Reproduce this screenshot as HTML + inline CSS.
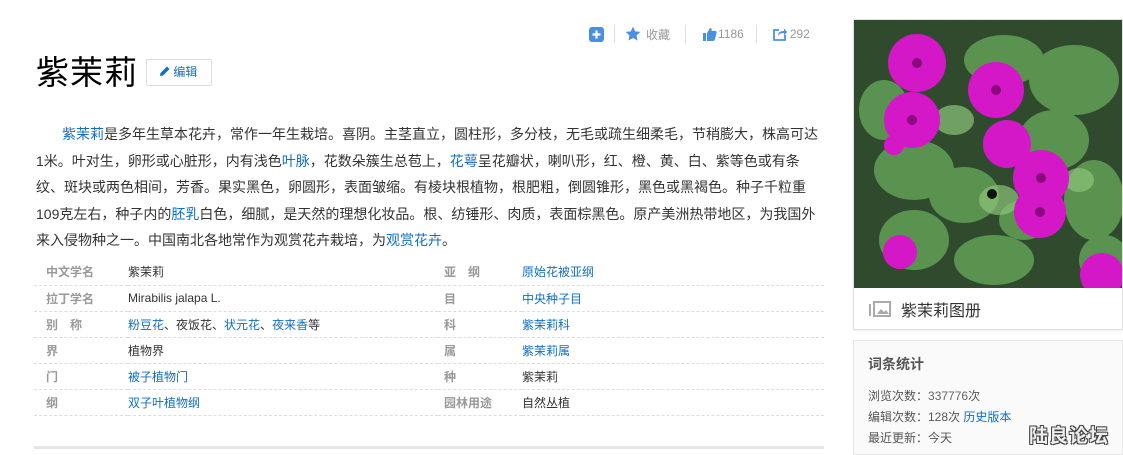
<!DOCTYPE html>
<html><head><meta charset="utf-8"><style>
*{margin:0;padding:0;box-sizing:border-box}
body{width:1123px;height:449px;overflow:hidden;background:#fff;font-family:"Liberation Sans","Noto Sans CJK SC",sans-serif;color:#333;position:relative}
a{color:#136ec2;text-decoration:none}
.abs{position:absolute}
.tools{top:24px;left:589px;height:20px;font-size:12px;color:#999;display:flex;align-items:center}
.sep{width:1px;height:18px;background:#ddd;margin:0 10px}
h1{position:absolute;left:36px;top:46px;font-size:33px;font-weight:normal;color:#000;letter-spacing:1px}
.edit{left:146px;top:59px;width:66px;height:27px;border:1px solid #ddd;border-radius:2px;font-size:12px;color:#136ec2;line-height:25px;padding-left:12px}
.para{left:36px;top:121px;width:786px;font-size:14px;line-height:26.5px;text-indent:26px;color:#333}
table{position:absolute;left:34px;top:259px;width:790px;border-collapse:collapse;font-size:12px}
td{height:26px;border-bottom:1px dashed #ddd;vertical-align:middle}
td.k{color:#999;font-weight:bold;padding-left:12px;width:94px}
td.v{width:310px}
td.k2{color:#999;font-weight:bold;padding-left:6px;width:84px}
.bottom{left:34px;top:446px;width:790px;height:3px;background:#e6e6e6}
.card{left:853px;top:19px;width:270px;height:311px;border:1px solid #e0e0e0;box-shadow:0 1px 2px #eee}
.stat{left:853px;top:340px;width:270px;height:115px;border:1px solid #e6e6e6;background:#fafafa;font-size:12px}
</style></head><body>
<div class="abs tools">
<svg width="15" height="15"><rect width="15" height="15" rx="3" fill="#4a90e2"/><path d="M7.5 3.5v8M3.5 7.5h8" stroke="#fff" stroke-width="2.2"/></svg>
<div class="sep"></div>
<svg width="16" height="16" viewBox="0 0 24 24"><path d="M12 1l3.3 7 7.7.9-5.7 5.3 1.5 7.6L12 18l-6.8 3.8 1.5-7.6L1 8.9 8.7 8z" fill="#4a90e2"/></svg>
<span style="margin-left:5px">收藏</span>
<div class="sep" style="margin-left:15px;margin-right:17px"></div>
<svg width="14" height="14" viewBox="0 0 14 14"><rect x="0" y="6" width="3" height="8" fill="#4a90e2"/><path d="M4 6l3-5c1.5 0 2 1 1.5 3h4c1 0 1.5 1 1 2l-1.5 6c-.3 1-1 2-2 2H4z" fill="#4a90e2"/></svg>
<span style="margin-left:1px">1186</span>
<div class="sep" style="margin-left:12px;margin-right:16px"></div>
<svg width="14" height="14" viewBox="0 0 14 14"><path d="M12 8v5H1V3h5" stroke="#4a90e2" stroke-width="1.8" fill="none"/><path d="M5 9c0-4 3-5 6-5V1.5L14 5l-3 3.5V6C8 6 6 7 5 9z" fill="#4a90e2"/></svg>
<span style="margin-left:3px">292</span>
</div>
<h1>紫茉莉</h1>
<div class="abs edit"><svg width="11" height="11" viewBox="0 0 11 11" style="vertical-align:-1px"><path d="M1 10l.5-3L8 .5l2.5 2.5L4 9.5z" fill="#136ec2"/></svg> 编辑</div>
<div class="abs para"><a>紫茉莉</a>是多年生草本花卉，常作一年生栽培。喜阴。主茎直立，圆柱形，多分枝，无毛或疏生细柔毛，节稍膨大，株高可达1米。叶对生，卵形或心脏形，内有浅色<a>叶脉</a>，花数朵簇生总苞上，<a>花萼</a>呈花瓣状，喇叭形，红、橙、黄、白、紫等色或有条纹、斑块或两色相间，芳香。果实黑色，卵圆形，表面皱缩。有棱块根植物，根肥粗，倒圆锥形，黑色或黑褐色。种子千粒重109克左右，种子内的<a>胚乳</a>白色，细腻，是天然的理想化妆品。根、纺锤形、肉质，表面棕黑色。原产美洲热带地区，为我国外来入侵物种之一。中国南北各地常作为观赏花卉栽培，为<a>观赏花卉</a>。</div>
<table>
<tr><td class="k">中文学名</td><td class="v">紫茉莉</td><td class="k2">亚　纲</td><td><a>原始花被亚纲</a></td></tr>
<tr><td class="k">拉丁学名</td><td class="v">Mirabilis jalapa L.</td><td class="k2">目</td><td><a>中央种子目</a></td></tr>
<tr><td class="k">别　称</td><td class="v"><a>粉豆花</a>、夜饭花、<a>状元花</a>、<a>夜来香</a>等</td><td class="k2">科</td><td><a>紫茉莉科</a></td></tr>
<tr><td class="k">界</td><td class="v">植物界</td><td class="k2">属</td><td><a>紫茉莉属</a></td></tr>
<tr><td class="k">门</td><td class="v"><a>被子植物门</a></td><td class="k2">种</td><td>紫茉莉</td></tr>
<tr><td class="k">纲</td><td class="v"><a>双子叶植物纲</a></td><td class="k2">园林用途</td><td>自然丛植</td></tr>
</table>
<div class="abs bottom"></div>
<div class="abs card">
<svg width="268" height="268" style="display:block">
<rect width="268" height="268" fill="#2f4a2c"/>
<g fill="#5f9a55" opacity=".9">
<ellipse cx="150" cy="40" rx="40" ry="25"/><ellipse cx="220" cy="60" rx="45" ry="35"/><ellipse cx="60" cy="150" rx="40" ry="30"/>
<ellipse cx="110" cy="175" rx="35" ry="28"/><ellipse cx="200" cy="120" rx="35" ry="30"/><ellipse cx="240" cy="180" rx="30" ry="40"/>
<ellipse cx="60" cy="220" rx="35" ry="30"/><ellipse cx="140" cy="240" rx="40" ry="25"/><ellipse cx="30" cy="90" rx="25" ry="30"/>
<ellipse cx="170" cy="200" rx="25" ry="20"/><ellipse cx="250" cy="240" rx="25" ry="25"/></g>
<g fill="#8cc47a" opacity=".7"><ellipse cx="100" cy="100" rx="20" ry="15"/><ellipse cx="145" cy="180" rx="20" ry="15"/><ellipse cx="225" cy="160" rx="15" ry="12"/></g>
<g fill="#d418c8">
<circle cx="63" cy="43" r="29"/><circle cx="142" cy="70" r="28"/><circle cx="58" cy="100" r="28"/>
<circle cx="153" cy="124" r="24"/><circle cx="187" cy="158" r="28"/><circle cx="186" cy="192" r="26"/>
<circle cx="46" cy="232" r="17"/><circle cx="248" cy="255" r="22"/><circle cx="40" cy="125" r="10"/></g>
<g fill="#8a0a7e"><circle cx="63" cy="43" r="5"/><circle cx="142" cy="70" r="5"/><circle cx="58" cy="100" r="5"/><circle cx="187" cy="158" r="5"/><circle cx="186" cy="192" r="5"/></g>
<circle cx="138" cy="174" r="5" fill="#111"/>
</svg>
<div style="height:41px;display:flex;align-items:center;padding-left:15px;font-size:16px;color:#333">
<svg width="22" height="16" style="margin-right:10px"><rect x="0" y="3" width="2" height="12" fill="#aaa"/><rect x="5" y="1" width="16" height="14" fill="none" stroke="#aaa" stroke-width="2"/><path d="M8 13l4-5 3 3 2-2 3 4z" fill="#aaa"/></svg>紫茉莉图册</div>
</div>
<div class="abs stat">
<div style="position:absolute;left:14px;top:13px;font-size:14px;font-weight:bold;color:#555">词条统计</div>
<div style="position:absolute;left:14px;top:45px;line-height:21px;color:#555">浏览次数：<span style="color:#666">337776</span>次<br>编辑次数：128次 <a>历史版本</a><br>最近更新：今天</div>
<div style="position:absolute;left:175px;top:80px;font-size:19px;color:#eee;font-weight:bold;text-shadow:1px 1px 0 #444,-1px -1px 0 #444,1px -1px 0 #444,-1px 1px 0 #444;letter-spacing:1px">陆良论坛</div>
</div>
</body></html>
